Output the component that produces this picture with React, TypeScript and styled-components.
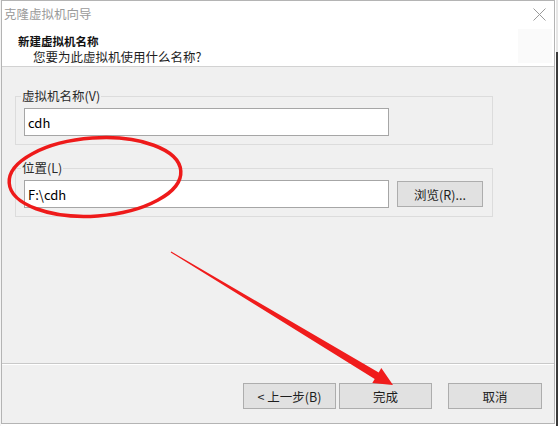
import React from "react";
import styled, { createGlobalStyle } from "styled-components";

const Global = createGlobalStyle`
  html, body { margin: 0; padding: 0; background: #ffffff; }
  body { font-family: "Noto Sans CJK SC", "Noto Sans", sans-serif; color: #1e1e1e; }
  * { box-sizing: border-box; }
`;

const Page = styled.div`
  width: 558px;
  height: 426px;
  overflow: hidden;
  display: flex;
  align-items: flex-start;
  background: linear-gradient(to right, #f4f4f4 0 1px, #ffffff 1px);
`;

const RightStrip = styled.div`
  width: 2px;
  height: 426px;
  margin-left: 1px;
  background: linear-gradient(to bottom, #e6e6e6 0 52px, #3a3a3a 52px 426px);
`;

const Window = styled.div`
  position: relative;
  margin-left: 1px;
  width: 555px;
  height: 424px;
  border: 1px solid #b4b4b4;
  background: #f0f0f0;
  display: flex;
  flex-direction: column;
`;

const TitleBar = styled.div`
  height: 26px;
  background: #ffffff;
  display: flex;
  align-items: center;
  justify-content: space-between;
  padding-left: 2px;
`;

const TitleText = styled.span`
  font-size: 12.5px;
  color: #9a9a9a;
  line-height: 16px;
`;

const CloseBox = styled.div`
  width: 46px;
  height: 26px;
  display: flex;
  align-items: center;
  justify-content: flex-end;
  padding-right: 8px;
`;

const Header = styled.div`
  height: 40px;
  background: #ffffff;
  border-bottom: 1px solid #d2d2d2;
  display: flex;
  justify-content: space-between;
  align-items: flex-start;
  padding-left: 16px;
`;

const HeaderTexts = styled.div`
  display: flex;
  flex-direction: column;
  padding-top: 6px;
`;

const HeaderTitle = styled.div`
  font-size: 11.5px;
  font-weight: bold;
  line-height: 16px;
  color: #111;
`;

const HeaderSub = styled.div`
  font-size: 12.5px;
  line-height: 16px;
  padding-left: 15px;
  color: #1e1e1e;
`;

const HeaderIcon = styled.div`
  width: 34px;
  height: 34px;
  margin-top: 2px;
  margin-right: 2px;
  background: #fafafa;
`;

const Body = styled.div`
  flex: 1;
  padding: 21px 0 0 13px;
  display: flex;
  flex-direction: column;
  gap: 15px;
`;

const GroupBox = styled.fieldset`
  margin: 0;
  width: 478px;
  border: 1px solid #dcdcdc;
  padding: 4px 8px 8px 8px;
  display: flex;
  align-items: center;
  gap: 8px;
`;

const Legend = styled.legend`
  font-size: 12.5px;
  line-height: 16px;
  padding: 0 1px;
  margin-left: -3px;
  color: #2a2a2a;
`;

const TextBox = styled.div`
  width: 365px;
  height: 28px;
  border: 1px solid #a6a6a6;
  background: #ffffff;
  padding-left: 3px;
  display: flex;
  align-items: center;
  font-size: 13px;
  color: #000;
`;

const Button = styled.div<{ $w: number }>`
  width: ${(p) => p.$w}px;
  height: 26px;
  border: 1px solid #adadad;
  background: #e1e1e1;
  display: flex;
  align-items: center;
  justify-content: center;
  font-size: 12.5px;
  color: #1e1e1e;
  white-space: nowrap;
`;

const Footer = styled.div`
  height: 60px;
  border-top: 1px solid #c9c9c9;
  box-shadow: inset 0 1px 0 #ffffff;
  display: flex;
  justify-content: flex-end;
  align-items: flex-start;
  padding: 19px 12px 0 0;
  gap: 3px;
`;

const Spacer = styled.div`
  width: 10px;
`;

const Annotations = styled.svg`
  position: absolute;
  left: -2px;
  top: -1px;
  width: 558px;
  height: 426px;
  pointer-events: none;
`;

export default function App() {
  return (
    <>
      <Global />
      <Page>
        <Window>
          <TitleBar>
            <TitleText>克隆虚拟机向导</TitleText>
            <CloseBox>
              <svg width="13" height="13" viewBox="0 0 13 13">
                <path d="M0.5 0.5 L12.5 12.5 M12.5 0.5 L0.5 12.5" stroke="#9a9a9a" strokeWidth="1" fill="none" />
              </svg>
            </CloseBox>
          </TitleBar>
          <Header>
            <HeaderTexts>
              <HeaderTitle>新建虚拟机名称</HeaderTitle>
              <HeaderSub>您要为此虚拟机使用什么名称?</HeaderSub>
            </HeaderTexts>
            <HeaderIcon />
          </Header>
          <Body>
            <GroupBox>
              <Legend>虚拟机名称(V)</Legend>
              <TextBox>cdh</TextBox>
            </GroupBox>
            <GroupBox>
              <Legend>位置(L)</Legend>
              <TextBox>F:\cdh</TextBox>
              <Button $w={86}>浏览(R)...</Button>
            </GroupBox>
          </Body>
          <Footer>
            <Button $w={93}>&lt; 上一步(B)</Button>
            <Button $w={93}>完成</Button>
            <Spacer />
            <Button $w={94}>取消</Button>
          </Footer>
          <Annotations viewBox="0 0 558 426">
            <ellipse cx="95" cy="177" rx="86" ry="39" transform="rotate(-4 95 177)" fill="none" stroke="#ee1a1a" strokeWidth="3.5" />
            <polygon
              points="171.3,251.6 378.7,372.5 381.3,368.1 393,385 372.3,383.1 374.7,379 170.7,252.4"
              fill="#f01c1c"
            />
          </Annotations>
        </Window>
        <RightStrip />
      </Page>
    </>
  );
}
